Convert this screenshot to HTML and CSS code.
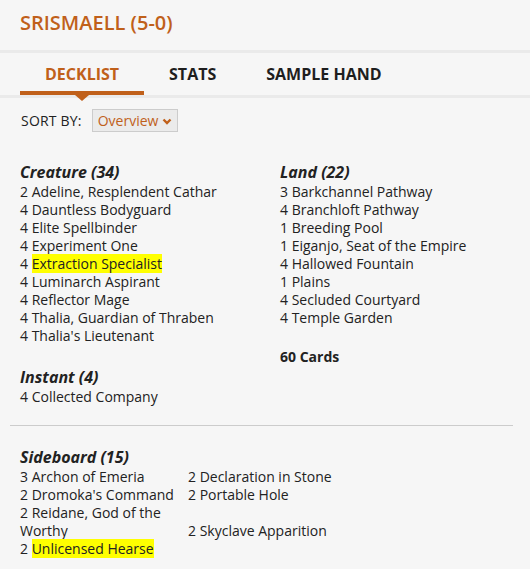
FILE: index.html
```html
<!DOCTYPE html>
<html>
<head>
<meta charset="utf-8">
<link rel="stylesheet" href="styles.css">
</head>
<body>
<div class="page">
  <header class="header"><h1 class="title">SRISMAELL (5-0)</h1></header>
  <div class="band"></div>
  <nav class="tabs">
    <div class="tab active">DECKLIST<span class="pointer"></span></div>
    <div class="tab">STATS</div>
    <div class="tab">SAMPLE HAND</div>
  </nav>
  <div class="band"></div>
  <div class="sort">
    <span class="sort-label">SORT BY:</span>
    <div class="select"><span>Overview</span>
      <svg class="chev" width="10" height="7" viewBox="0 0 10 7"><polyline points="1.5,1.5 5,5 8.5,1.5" fill="none" stroke="#c0601a" stroke-width="2.4"/></svg>
    </div>
  </div>
  <div class="deck">
    <div class="col">
      <section class="group">
        <h3 class="gh">Creature (34)</h3>
        <div class="item">2 Adeline, Resplendent Cathar</div>
        <div class="item">4 Dauntless Bodyguard</div>
        <div class="item">4 Elite Spellbinder</div>
        <div class="item">4 Experiment One</div>
        <div class="item">4 <span class="hl">Extraction Specialist</span></div>
        <div class="item">4 Luminarch Aspirant</div>
        <div class="item">4 Reflector Mage</div>
        <div class="item">4 Thalia, Guardian of Thraben</div>
        <div class="item">4 Thalia's Lieutenant</div>
      </section>
      <section class="group">
        <h3 class="gh">Instant (4)</h3>
        <div class="item">4 Collected Company</div>
      </section>
    </div>
    <div class="col">
      <section class="group">
        <h3 class="gh">Land (22)</h3>
        <div class="item">3 Barkchannel Pathway</div>
        <div class="item">4 Branchloft Pathway</div>
        <div class="item">1 Breeding Pool</div>
        <div class="item">1 Eiganjo, Seat of the Empire</div>
        <div class="item">4 Hallowed Fountain</div>
        <div class="item">1 Plains</div>
        <div class="item">4 Secluded Courtyard</div>
        <div class="item">4 Temple Garden</div>
      </section>
      <div class="total">60 Cards</div>
    </div>
  </div>
  <hr class="rule">
  <section class="side">
    <h3 class="gh">Sideboard (15)</h3>
    <div class="side-grid">
      <div class="item">3 Archon of Emeria</div>
      <div class="item">2 Declaration in Stone</div>
      <div class="item">2 Dromoka's Command</div>
      <div class="item">2 Portable Hole</div>
      <div class="item">2 Reidane, God of the Worthy</div>
      <div class="item">2 Skyclave Apparition</div>
      <div class="item">2 <span class="hl">Unlicensed Hearse</span></div>
    </div>
  </section>
</div>
</body>
</html>
```
FILE: styles.css
```css
* { box-sizing: border-box; }
html, body { margin: 0; padding: 0; background: #ffffff; }
body { font-family: "Open Sans", "Liberation Sans", sans-serif; color: #222222; font-size: 14px; }
.page { background: #f6f6f6; padding-bottom: 11px; }
.header { height: 50px; padding: 10px 20px 0; }
.title { margin: 0; font-size: 20px; line-height: 26px; font-weight: 600; color: #c0601a; }
.band { height: 3px; background: #eaeaea; }
.tabs { display: flex; padding: 0 20px; height: 42px; align-items: flex-end; }
.tab { position: relative; padding: 0 25px 6px; font-size: 16px; line-height: 22px; font-weight: 700; color: #1e1e1e; border-bottom: 4px solid transparent; }
.tab.active { color: #c0601a; border-bottom-color: #c0601a; }
.pointer { position: absolute; left: 50%; top: 100%; margin-left: -7px; margin-top: 4px; width: 0; height: 0; border-left: 7px solid transparent; border-right: 7px solid transparent; border-top: 6px solid #c0601a; }
.sort { display: flex; align-items: center; gap: 10px; padding: 11px 20px 0 21px; }
.sort-label { line-height: 23px; letter-spacing: 0.2px; }
.select { display: flex; align-items: center; justify-content: space-between; height: 23px; width: 86px; padding: 0 5px 0 5px; border: 1px solid #cccccc; background: #ebebeb; color: #c0601a; line-height: 21px; }
.chev { margin-top: 1px; }
.deck { display: grid; grid-template-columns: 260px 1fr; padding: 29px 0 0 20px; }
.group + .group { margin-top: 21px; }
.gh { margin: 0; font-size: 16px; line-height: 22px; font-weight: 700; font-style: italic; color: #222222; }
.item { line-height: 18px; }
.hl { background: #ffff00; }
.total { margin-top: 21px; font-weight: 700; line-height: 18px; }
.rule { margin: 19px 17px 0 10px; border: 0; border-top: 1px solid #cccccc; height: 0; }
.side { padding: 20px 0 0 20px; }
.side-grid { display: grid; grid-template-columns: 168px 1fr; align-items: end; }
```
